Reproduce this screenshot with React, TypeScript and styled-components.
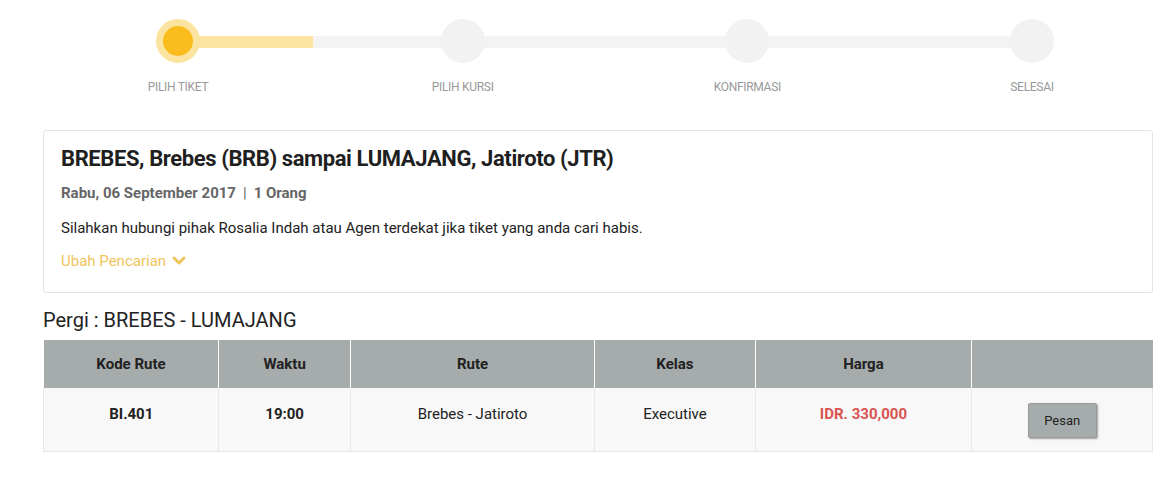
import React from 'react'
import styled, { createGlobalStyle } from 'styled-components'

const GlobalStyle = createGlobalStyle`
    body {
        margin: 0;
        background: #fff;
        font-family: Roboto, "Liberation Sans", sans-serif;
        color: #222;
    }
`

const Page = styled.div`
    width: 1110px;
    padding: 19px 19px 0 43px;
`

const Stepper = styled.div`
    position: relative;
    display: flex;
    justify-content: space-between;
    width: 898px;
    margin-left: 113px;
`

const Track = styled.div`
    position: absolute;
    top: 17px;
    left: 22px;
    right: 22px;
    height: 12px;
    background: #f3f3f3;
`

const TrackFill = styled.div`
    height: 100%;
    background: #fbe3a0;
`

const Step = styled.div`
    position: relative;
    display: flex;
    flex-direction: column;
    align-items: center;
    width: 44px;
`

const Dot = styled.div<{ $active?: boolean }>`
    width: 44px;
    height: 44px;
    box-sizing: border-box;
    border-radius: 50%;
    background: ${({ $active }) => ($active ? '#fbbc1e' : '#f2f2f2')};
    border: 7px solid ${({ $active }) => ($active ? '#fbe3a0' : '#f2f2f2')};
`

const StepLabel = styled.div`
    margin-top: 17px;
    font-size: 12px;
    line-height: 14px;
    color: #999;
    white-space: nowrap;
    letter-spacing: -0.3px;
`

const Card = styled.div`
    margin-top: 36px;
    border: 1px solid #e3e3e3;
    border-radius: 3px;
    padding: 14px 17px 22px;
`

const Title = styled.h1`
    margin: 0;
    font-size: 22px;
    line-height: 28px;
    font-weight: bold;
    color: #1f1f1f;
    letter-spacing: -0.4px;
`

const Meta = styled.div`
    margin-top: 11px;
    font-size: 15px;
    line-height: 18px;
    font-weight: bold;
    color: #666;
`

const Sep = styled.span`
    margin: 0 7px;
    font-weight: normal;
`

const Info = styled.p`
    margin: 17px 0 0;
    font-size: 15px;
    line-height: 18px;
    color: #222;
`

const Toggle = styled.a`
    display: inline-flex;
    align-items: center;
    gap: 6px;
    margin-top: 15px;
    font-size: 15px;
    line-height: 18px;
    color: #f0c45c;
    cursor: pointer;
`

const Heading = styled.h2`
    margin: 15px 0 8px;
    font-size: 20px;
    line-height: 24px;
    font-weight: normal;
    color: #222;
`

const Table = styled.table`
    width: 100%;
    border-collapse: collapse;
    font-size: 14px;
`

const Th = styled.th<{ $w: number }>`
    width: ${({ $w }) => $w}px;
    height: 48px;
    padding: 0;
    background: #a6abac;
    border-left: 1px solid #fff;
    font-size: 15px;
    font-weight: bold;
    color: #222;
    &:first-child { border-left: none; }
`

const Td = styled.td<{ $bold?: boolean; $price?: boolean }>`
    height: 63px;
    padding: 17px 0 0;
    box-sizing: border-box;
    vertical-align: top;
    text-align: center;
    background: #f8f8f8;
    border: 1px solid #e8e8e8;
    border-top: none;
    font-weight: ${({ $bold, $price }) => ($bold || $price ? 'bold' : 'normal')};
    color: ${({ $price }) => ($price ? '#d9534f' : '#222')};
    font-size: 15px;
    line-height: 18px;
`

const ButtonCell = styled(Td)`
    padding-top: 15px;
`

const PesanButton = styled.button`
    width: 69px;
    height: 35px;
    background: #a6abac;
    border: 1px solid #999;
    border-radius: 2px;
    box-shadow: 1px 1px 2px rgba(0, 0, 0, 0.35);
    font-family: inherit;
    font-size: 13px;
    color: #222;
    cursor: pointer;
`

const Chevron = () => (
    <svg width="14" height="10" viewBox="0 0 14 10">
        <path d="M2 2 L7 7 L12 2" fill="none" stroke="#f0c45c" strokeWidth="3" strokeLinecap="round" strokeLinejoin="round" />
    </svg>
)

const steps = ['PILIH TIKET', 'PILIH KURSI', 'KONFIRMASI', 'SELESAI']

const columns: [string, number][] = [
    ['Kode Rute', 176],
    ['Waktu', 131],
    ['Rute', 245],
    ['Kelas', 160],
    ['Harga', 217],
    ['', 181],
]

const App = () => {
    return (
        <Page>
            <GlobalStyle />
            <Stepper>
                <Track><TrackFill style={{ width: '15.8%' }} /></Track>
                {steps.map((label, i) => (
                    <Step key={label}>
                        <Dot $active={i === 0} />
                        <StepLabel>{label}</StepLabel>
                    </Step>
                ))}
            </Stepper>
            <Card>
                <Title>BREBES, Brebes (BRB) sampai LUMAJANG, Jatiroto (JTR)</Title>
                <Meta>Rabu, 06 September 2017<Sep>|</Sep>1 Orang</Meta>
                <Info>Silahkan hubungi pihak Rosalia Indah atau Agen terdekat jika tiket yang anda cari habis.</Info>
                <Toggle>Ubah Pencarian <Chevron /></Toggle>
            </Card>
            <Heading>Pergi : BREBES - LUMAJANG</Heading>
            <Table>
                <thead>
                    <tr>
                        {columns.map(([name, w]) => <Th key={name || 'action'} $w={w}>{name}</Th>)}
                    </tr>
                </thead>
                <tbody>
                    <tr>
                        <Td $bold>BI.401</Td>
                        <Td $bold>19:00</Td>
                        <Td>Brebes - Jatiroto</Td>
                        <Td>Executive</Td>
                        <Td $price>IDR. 330,000</Td>
                        <ButtonCell><PesanButton>Pesan</PesanButton></ButtonCell>
                    </tr>
                </tbody>
            </Table>
        </Page>
    )
}

export default App
